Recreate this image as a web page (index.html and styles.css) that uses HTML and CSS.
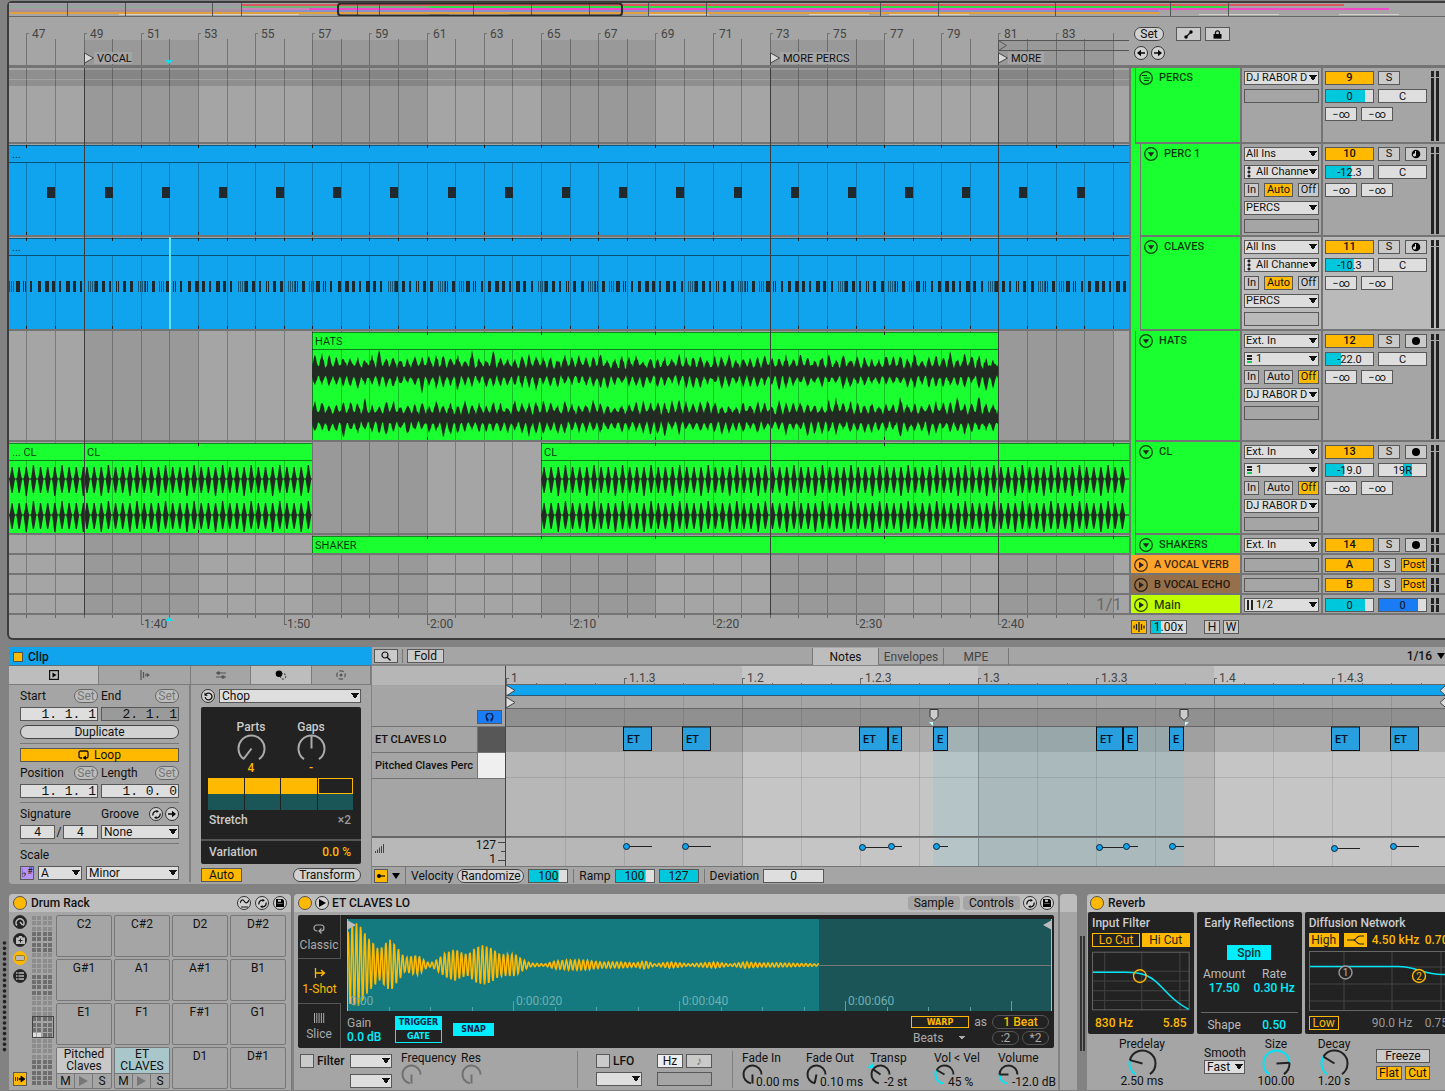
FILE: index.html
```html
<!DOCTYPE html>
<html lang="en">
<head>
<meta charset="utf-8">
<title>Arrangement</title>
<link rel="stylesheet" href="styles.css">
</head>
<body>
<main class="arrange">
  <svg class="overview" id="overview" viewBox="0 0 1436 13" preserveAspectRatio="none" aria-hidden="true"></svg>
  <div class="split ruler-row">
    <svg class="ruler" id="ruler"></svg>
    <div class="ruler-tools">
      <div class="tools">
        <button class="pill">Set</button>
        <button class="btn wide" aria-label="Automation"><svg width="9" height="9" viewBox="0 0 9 9"><path d="M2 7 7 2" stroke="#111" stroke-width="1.3"/><circle cx="2" cy="7" r="1.7"/><circle cx="7" cy="2" r="1.7"/></svg></button>
        <button class="btn wide second" aria-label="Lock"><svg width="9" height="9" viewBox="0 0 9 9"><path d="M2.5 4V2.8a2 2 0 0 1 4 0V4" fill="none" stroke="#111" stroke-width="1.3"/><rect x=".5" y="4" width="8" height="4.6"/></svg></button>
      </div>
      <div class="tools near">
        <button class="round" aria-label="Previous locator"><svg width="8" height="8" viewBox="0 0 8 8"><path d="M8 4H2" stroke="#111" stroke-width="1.6"/><path d="M0 4 4 .8v6.4z"/></svg></button>
        <button class="round" aria-label="Next locator"><svg width="8" height="8" viewBox="0 0 8 8"><path d="M0 4h6" stroke="#111" stroke-width="1.6"/><path d="M8 4 4 .8v6.4z"/></svg></button>
      </div>
    </div>
  </div>

  <section class="track h-group">
    <svg class="lane" data-lane="percs"></svg>
    <div class="head green"><div class="name"><svg class="fold" viewBox="0 0 14 14"><circle cx="7" cy="7" r="6.3"/><path d="M3 4.500h5M5 7h6M5 9.500h5"/></svg>PERCS</div></div>
    <div class="io"><select aria-label="PERCS output"><option>DJ RABOR D</option></select><div class="empty"></div></div>
    <div class="mix"><div class="strip"><button class="num">9</button><button class="btn s">S</button></div>
      <div class="strip"><input class="val" aria-label="Volume" value="0" style="--v:83%"><input class="val" aria-label="Pan" value="C"></div>
      <div class="strip"><input class="send" aria-label="Send A" value="−∞"><input class="send" aria-label="Send B" value="−∞"></div><i class="meter"></i></div>
  </section>
  <section class="track h-track">
    <svg class="lane" data-lane="perc1"></svg>
    <div class="head green"><div class="name nested"><svg class="fold" viewBox="0 0 14 14"><circle cx="7" cy="7" r="6.3"/><path class="solid" d="M3.800 5.200h6.400L7 9.800z"/></svg>PERC 1</div></div>
    <div class="io"><select aria-label="PERC 1 input"><option>All Ins</option></select><select class="midi" aria-label="PERC 1 channel"><option>All Channels</option></select>
      <div class="mon"><button class="btn">In</button><button class="btn on">Auto</button><button class="btn">Off</button></div><select aria-label="PERC 1 output"><option>PERCS</option></select><div class="empty"></div></div>
    <div class="mix"><div class="strip"><button class="num">10</button><button class="btn s">S</button><button class="btn s" aria-label="Arm"><svg class="arm" viewBox="0 0 10 10"><circle cx="5" cy="5" r="4.300"/><path d="M5 2v4a1.500 1.500 0 1 1-1-1.400V2z" fill="#ddd"/></svg></button></div>
      <div class="strip"><input class="val" aria-label="Volume" value="-12.3" style="--v:54%"><input class="val" aria-label="Pan" value="C"></div>
      <div class="strip"><input class="send" aria-label="Send A" value="−∞"><input class="send" aria-label="Send B" value="−∞"></div><i class="meter"></i></div>
  </section>
  <section class="track h-track2 selected">
    <svg class="lane" data-lane="claves"></svg>
    <div class="head green"><div class="name nested"><svg class="fold" viewBox="0 0 14 14"><circle cx="7" cy="7" r="6.3"/><path class="solid" d="M3.800 5.200h6.400L7 9.800z"/></svg>CLAVES</div></div>
    <div class="io"><select aria-label="CLAVES input"><option>All Ins</option></select><select class="midi" aria-label="CLAVES channel"><option>All Channels</option></select>
      <div class="mon"><button class="btn">In</button><button class="btn on">Auto</button><button class="btn">Off</button></div><select aria-label="CLAVES output"><option>PERCS</option></select><div class="empty"></div></div>
    <div class="mix"><div class="strip"><button class="num">11</button><button class="btn s">S</button><button class="btn s" aria-label="Arm"><svg class="arm" viewBox="0 0 10 10"><circle cx="5" cy="5" r="4.300"/><path d="M5 2v4a1.500 1.500 0 1 1-1-1.400V2z" fill="#ddd"/></svg></button></div>
      <div class="strip"><input class="val" aria-label="Volume" value="-10.3" style="--v:59%"><input class="val" aria-label="Pan" value="C"></div>
      <div class="strip"><input class="send" aria-label="Send A" value="−∞"><input class="send" aria-label="Send B" value="−∞"></div><i class="meter"></i></div>
  </section>
  <section class="track h-hats">
    <svg class="lane" data-lane="hats"></svg>
    <div class="head green"><div class="name"><svg class="fold" viewBox="0 0 14 14"><circle cx="7" cy="7" r="6.3"/><path class="solid" d="M3.800 5.200h6.400L7 9.800z"/></svg>HATS</div></div>
    <div class="io"><select aria-label="HATS input"><option>Ext. In</option></select><select class="audio" aria-label="HATS channel"><option>1</option></select>
      <div class="mon"><button class="btn">In</button><button class="btn">Auto</button><button class="btn on">Off</button></div><select aria-label="HATS output"><option>DJ RABOR D</option></select><div class="empty"></div></div>
    <div class="mix"><div class="strip"><button class="num">12</button><button class="btn s">S</button><button class="btn s" aria-label="Arm"><svg class="arm" viewBox="0 0 10 10"><circle cx="5" cy="5" r="4"/></svg></button></div>
      <div class="strip"><input class="val" aria-label="Volume" value="-22.0" style="--v:32%"><input class="val" aria-label="Pan" value="C"></div>
      <div class="strip"><input class="send" aria-label="Send A" value="−∞"><input class="send" aria-label="Send B" value="−∞"></div><i class="meter"></i></div>
  </section>
  <section class="track h-track">
    <svg class="lane" data-lane="cl"></svg>
    <div class="head green"><div class="name"><svg class="fold" viewBox="0 0 14 14"><circle cx="7" cy="7" r="6.3"/><path class="solid" d="M3.800 5.200h6.400L7 9.800z"/></svg>CL</div></div>
    <div class="io"><select aria-label="CL input"><option>Ext. In</option></select><select class="audio" aria-label="CL channel"><option>1</option></select>
      <div class="mon"><button class="btn">In</button><button class="btn">Auto</button><button class="btn on">Off</button></div><select aria-label="CL output"><option>DJ RABOR D</option></select><div class="empty"></div></div>
    <div class="mix"><div class="strip"><button class="num">13</button><button class="btn s">S</button><button class="btn s" aria-label="Arm"><svg class="arm" viewBox="0 0 10 10"><circle cx="5" cy="5" r="4"/></svg></button></div>
      <div class="strip"><input class="val" aria-label="Volume" value="-19.0" style="--v:38%"><input class="val panned" aria-label="Pan" value="19R"></div>
      <div class="strip"><input class="send" aria-label="Send A" value="−∞"><input class="send" aria-label="Send B" value="−∞"></div><i class="meter"></i></div>
  </section>
  <section class="track h-slim last">
    <svg class="lane" data-lane="shaker"></svg>
    <div class="head green"><div class="name"><svg class="fold" viewBox="0 0 14 14"><circle cx="7" cy="7" r="6.3"/><path class="solid" d="M3.800 5.200h6.400L7 9.800z"/></svg>SHAKERS</div></div>
    <div class="io"><select aria-label="SHAKERS input"><option>Ext. In</option></select></div>
    <div class="mix"><div class="strip"><button class="num">14</button><button class="btn s">S</button><button class="btn s" aria-label="Arm"><svg class="arm" viewBox="0 0 10 10"><circle cx="5" cy="5" r="4"/></svg></button></div><i class="meter"></i></div>
  </section>
  <section class="track h-slim">
    <svg class="lane" data-lane="empty"></svg>
    <div class="head flat orange"><div class="name"><svg class="fold" viewBox="0 0 14 14"><circle cx="7" cy="7" r="6.3"/><path class="solid" d="M5 3.800v6.400L10 7z"/></svg>A VOCAL VERB</div></div>
    <div class="io"><div class="empty"></div></div>
    <div class="mix"><div class="strip"><button class="num">A</button><button class="btn s2">S</button><button class="btn post on">Post</button></div><i class="meter"></i></div>
  </section>
  <section class="track h-slim">
    <svg class="lane" data-lane="empty"></svg>
    <div class="head flat brown"><div class="name"><svg class="fold" viewBox="0 0 14 14"><circle cx="7" cy="7" r="6.3"/><path class="solid" d="M5 3.800v6.400L10 7z"/></svg>B VOCAL ECHO</div></div>
    <div class="io"><div class="empty"></div></div>
    <div class="mix"><div class="strip"><button class="num">B</button><button class="btn s2">S</button><button class="btn post on">Post</button></div><i class="meter"></i></div>
  </section>
  <section class="track h-slim">
    <svg class="lane" data-lane="main"></svg>
    <div class="head flat lime"><div class="name"><svg class="fold" viewBox="0 0 14 14"><circle cx="7" cy="7" r="6.3"/><path class="solid" d="M5 3.800v6.400L10 7z"/></svg><span class="main-name">Main</span></div></div>
    <div class="io"><select class="outs" aria-label="Main output"><option>1/2</option></select></div>
    <div class="mix"><div class="strip"><input class="val" aria-label="Main volume" value="0" style="--v:83%"><input class="val cue" aria-label="Cue volume" value="0" style="--v:83%"></div><i class="meter"></i></div>
  </section>
  <div class="split time-row">
    <svg class="time" id="time"></svg>
    <div class="view-tools">
      <button class="btn on sq" aria-label="Waveforms"><svg width="12" height="10" viewBox="0 0 12 10"><path d="M1 3.500v3M3.500 2v6M6 0v10M8.500 2v6M11 3.500v3" stroke="#222" stroke-width="1.300"/></svg></button>
      <input class="val speed" aria-label="Speed" value="1.00x" style="--v:29%">
      <button class="btn sq first">H</button><button class="btn sq">W</button>
    </div>
  </div>
</main>

<section class="middle">
  <div class="clip">
    <h2 class="clip-title"><i></i>Clip</h2>
    <div class="clip-tabs">
      <button class="active t1" aria-label="Clip"><svg width="10" height="10" viewBox="0 0 10 10"><rect x=".6" y=".6" width="8.800" height="8.800" fill="none" stroke="#111" stroke-width="1.200"/><path d="M3.500 2.500v5L7.500 5z"/></svg></button>
      <button class="t2" aria-label="Launch"><svg width="10" height="10" viewBox="0 0 10 10"><path d="M1 0v10M3.500 2v6M6 3.500v3" stroke="#555" stroke-width="1.200"/><path d="M7 3v4l3-2z" fill="#555"/></svg></button>
      <button class="t3" aria-label="Envelopes"><svg width="10" height="8" viewBox="0 0 10 8"><path d="M0 2h10M0 6h10" stroke="#555" stroke-width="1.200"/><circle cx="2.500" cy="2" r="1.700" fill="#555"/><circle cx="7" cy="6" r="1.700" fill="#555"/></svg></button>
      <button class="active t4" aria-label="Transform"><svg width="12" height="10" viewBox="0 0 12 10"><circle cx="4" cy="3.800" r="3.300"/><circle cx="8" cy="6.300" r="2.800" fill="none" stroke="#222" stroke-dasharray="2 1.500"/></svg></button>
      <button class="t5" aria-label="Generate"><svg width="10" height="10" viewBox="0 0 10 10"><circle cx="5" cy="5" r="4.200" fill="none" stroke="#555" stroke-width="1.200" stroke-dasharray="4.600 2" stroke-dashoffset="2.300"/><circle cx="5" cy="5" r="1.500" fill="#555"/></svg></button>
    </div>
    <div class="clip-body">
      <div class="clip-main">
        <div class="pair"><span class="lab">Start <button class="pill dim">Set</button></span><span class="lab">End <button class="pill dim">Set</button></span></div>
        <div class="pair"><input class="pos" aria-label="Start" value="1. 1. 1"><input class="pos off" aria-label="End" value="2. 1. 1"></div>
        <button class="pill full">Duplicate</button>
        <hr>
        <button class="btn on full"><svg width="11" height="10" viewBox="0 0 11 10"><path d="M4 8H2.500A1.500 1.500 0 0 1 1 6.500v-4A1.500 1.500 0 0 1 2.500 1h6A1.500 1.500 0 0 1 10 2.500v4A1.500 1.500 0 0 1 8.500 8H7" fill="none" stroke="#111" stroke-width="1.300"/><path d="M8 5.500v4.500L4.500 8z"/></svg> Loop</button>
        <div class="pair"><span class="lab">Position <button class="pill dim">Set</button></span><span class="lab">Length <button class="pill dim">Set</button></span></div>
        <div class="pair"><input class="pos" aria-label="Position" value="1. 1. 1"><input class="pos" aria-label="Length" value="1. 0. 0"></div>
        <hr>
        <div class="pair"><span class="lab">Signature</span><span class="lab">Groove <span class="rounds"><button class="round" aria-label="Swap groove"><svg width="9" height="9" viewBox="0 0 9 9"><path d="M1 5.500a3.500 3.500 0 0 1 4-4.300M8 3.500a3.500 3.500 0 0 1-4 4.300" fill="none" stroke="#111" stroke-width="1.300"/><path d="M4.500 0 7 1.300 4.500 3zM4.500 9 2 7.700 4.500 6z"/></svg></button><button class="round" aria-label="Commit groove"><svg width="8" height="8" viewBox="0 0 8 8"><path d="M0 4h6" stroke="#111" stroke-width="1.600"/><path d="M8 4 4 .8v6.400z"/></svg></button></span></span></div>
        <div class="pair"><span class="sig"><input class="val" aria-label="Numerator" value="4">/<input class="val" aria-label="Denominator" value="4"></span><select aria-label="Groove"><option>None</option></select></div>
        <hr>
        <div class="lab">Scale</div>
        <div class="scale"><button class="btn violet" aria-label="Use scale">♭<sup>#</sup></button><select aria-label="Root"><option>A</option></select><select class="grow" aria-label="Scale name"><option>Minor</option></select></div>
      </div>
      <div class="transform">
        <div class="scale"><button class="round" aria-label="Reset"><svg width="9" height="9" viewBox="0 0 9 9"><path d="M2 2.300A3.400 3.400 0 1 1 1.200 5" fill="none" stroke="#111" stroke-width="1.300"/><path d="M.5.500v3.300h3.300z"/></svg></button><select class="grow" aria-label="Transformation"><option>Chop</option></select></div>
        <div class="chop">
          <div class="chop-knobs">
            <div><span>Parts</span><svg class="knob" data-r="13" data-a="-143" data-c="#aaa"></svg><b>4</b></div>
            <div><span>Gaps</span><svg class="knob" data-r="13" data-a="0" data-c="#aaa"></svg><b>-</b></div>
          </div>
          <div class="parts"><i></i><i></i><i></i><i class="hollow"></i></div>
          <div class="line"><span>Stretch</span><span class="faint">×2</span></div>
          <div class="line foot"><span>Variation</span><b>0.0 %</b></div>
        </div>
        <div class="ends"><button class="btn on">Auto</button><button class="pill">Transform</button></div>
      </div>
    </div>
  </div>

  <div class="notes">
    <div class="notes-bar">
      <button class="btn search" aria-label="Find"><svg width="10" height="10" viewBox="0 0 10 10"><circle cx="4" cy="4" r="3" fill="none" stroke="#111" stroke-width="1.200"/><path d="m6.200 6.200 3.300 3.300" stroke="#111" stroke-width="1.400"/></svg></button>
      <i class="bar-sep"></i><button class="btn">Fold</button>
      <nav><a href="#notes" class="active">Notes</a><a href="#envelopes">Envelopes</a><a href="#mpe">MPE</a></nav>
      <span class="gridsize">1/16 <svg width="8" height="6" viewBox="0 0 8 6"><path d="M0 0h8L4 6z"/></svg></span>
    </div>
    <div class="roll">
      <div class="keys">
        <div class="keys-top"></div>
        <div class="keys-mid"><button class="btn blue" aria-label="Preview"><svg width="11" height="9" viewBox="0 0 11 9"><path d="M3.800 8.300V6.300A3.300 3.300 0 1 1 7.200 6.300v2" fill="none" stroke="#02235c" stroke-width="1.500"/><path d="M2 5h2v3.500L2 7zM9 5H7v3.500L9 7z" fill="#02235c"/></svg></button></div>
        <div class="key"><span>ET CLAVES LO</span><i class="black"></i></div>
        <div class="key"><span>Pitched Claves Perc</span><i></i></div>
        <div class="keys-rest"></div>
        <div class="vel"><svg width="9" height="9" viewBox="0 0 9 9"><path d="M.5 7v2M2.500 5.500V9M4.500 3.500V9M6.500 2v7M8.500 0v9" stroke="#444"/></svg><span>127<br>1</span></div>
      </div>
      <svg class="score" id="score"></svg>
    </div>
    <div class="vel-bar">
      <button class="btn on icon" aria-label="Velocity lane"><svg width="8" height="6" viewBox="0 0 8 6"><circle cx="2" cy="3" r="2"/><path d="M2 3h6" stroke="#111" stroke-width="1.300"/></svg></button>
      <svg width="8" height="6" viewBox="0 0 8 6"><path d="M0 0h8L4 6z"/></svg><i class="bar-sep tall"></i>
      <label for="rnd">Velocity</label><button class="pill">Randomize</button><input id="rnd" class="val" value="100" style="--v:78%">
      <i class="bar-sep"></i><label for="ramp">Ramp</label><input id="ramp" class="val" value="100" style="--v:78%"><input class="val" aria-label="Ramp end" value="127" style="--v:100%">
      <i class="bar-sep"></i><label for="dev">Deviation</label><input id="dev" class="val dev" value="0">
    </div>
  </div>
</section>

<section class="devices">
  <svg class="dots" id="dots"></svg>
  <article class="device rack">
    <header><i class="led"></i><h3>Drum Rack</h3>
      <button class="round" aria-label="Macro"><svg width="9" height="9" viewBox="0 0 9 9"><path d="M0 4c1.500-4 3-4 4.500-1.500S7.500 4 9 1M1 8h7" fill="none" stroke="#111" stroke-width="1.200"/></svg></button>
      <button class="round" aria-label="Swap"><svg width="9" height="9" viewBox="0 0 9 9"><path d="M1 5.500a3.500 3.500 0 0 1 4-4.300M8 3.500a3.500 3.500 0 0 1-4 4.300" fill="none" stroke="#111" stroke-width="1.300"/><path d="M4.500 0 7 1.300 4.500 3zM4.500 9 2 7.700 4.500 6z"/></svg></button>
      <button class="round" aria-label="Save"><svg width="8" height="8" viewBox="0 0 8 8"><path d="M0 0h6.500L8 1.500V8H0z"/><path d="M2 .8h3v2H2zM1.500 4.500h5V5h-5z" fill="#ccc"/></svg></button></header>
    <div class="rack-body">
      <div class="rack-icons">
        <button class="round dark" aria-label="Macros"><svg width="10" height="10" viewBox="0 0 10 10"><path d="M2 8.500A4 4 0 1 1 8 8.500M5 5l2.500 3" fill="none" stroke="#bbb" stroke-width="1.600"/></svg></button>
        <button class="round dark" aria-label="Variations"><svg width="9" height="8" viewBox="0 0 9 8"><path d="M0 1.500h2.500L3 0h3l.5 1.500H9V8H0z" fill="#bbb"/><path d="M4.500 2.500v4M2.500 4.500h4" stroke="#222"/></svg></button>
        <button class="round gold" aria-label="Pads"><svg width="10" height="6" viewBox="0 0 10 6"><rect x=".5" y=".5" width="9" height="5" rx="1" fill="#bbb" stroke="#9a7a20"/></svg></button>
        <button class="round dark" aria-label="Chains"><svg width="8" height="8" viewBox="0 0 8 8"><path d="M0 1h1.500M0 4h1.500M0 7h1.500M2.500 1H8M2.500 4H8M2.500 7H8" stroke="#bbb" stroke-width="1.300"/></svg></button>
        <button class="btn on auto" aria-label="Auto select"><svg width="10" height="8" viewBox="0 0 10 8"><path d="M.5 2v4M2.500 2v4M4 3.300h2V1l4 3-4 3V4.700H4z" stroke="#111" stroke-width=".8"/></svg></button>
      </div>
      <svg class="minimap" id="minimap"></svg>
      <div class="pads">
        <div class="pad">C2</div><div class="pad">C#2</div><div class="pad">D2</div><div class="pad">D#2</div>
        <div class="pad">G#1</div><div class="pad">A1</div><div class="pad">A#1</div><div class="pad">B1</div>
        <div class="pad">E1</div><div class="pad">F1</div><div class="pad">F#1</div><div class="pad">G1</div>
        <div class="pad full"><span>Pitched<br>Claves</span><div><button>M</button><button aria-label="Play"><svg width="9" height="10" viewBox="0 0 9 10"><path d="M0 0v10l9-5z" fill="#777"/></svg></button><button>S</button></div></div>
        <div class="pad full sel"><span>ET<br>CLAVES</span><div><button>M</button><button aria-label="Play"><svg width="9" height="10" viewBox="0 0 9 10"><path d="M0 0v10l9-5z" fill="#777"/></svg></button><button>S</button></div></div>
        <div class="pad">D1</div><div class="pad">D#1</div>
      </div>
    </div>
  </article>

  <article class="device sampler">
    <header><i class="led"></i><button class="round" aria-label="Preview"><svg width="8" height="8" viewBox="0 0 8 8"><path d="M1 0v8l7-4z"/></svg></button><h3>ET CLAVES LO</h3>
      <a href="#sample" class="tab">Sample</a><a href="#controls" class="tab">Controls</a>
      <button class="round" aria-label="Swap"><svg width="9" height="9" viewBox="0 0 9 9"><path d="M1 5.500a3.500 3.500 0 0 1 4-4.300M8 3.500a3.500 3.500 0 0 1-4 4.300" fill="none" stroke="#111" stroke-width="1.300"/><path d="M4.500 0 7 1.300 4.500 3zM4.500 9 2 7.700 4.500 6z"/></svg></button>
      <button class="round" aria-label="Save"><svg width="8" height="8" viewBox="0 0 8 8"><path d="M0 0h6.500L8 1.500V8H0z"/><path d="M2 .8h3v2H2zM1.500 4.500h5V5h-5z" fill="#ccc"/></svg></button></header>
    <div class="screen">
      <div class="modes">
        <button><svg width="12" height="12" viewBox="0 0 12 12"><path d="M4.500 8H4a3 3 0 0 1 0-6h4a3 3 0 0 1 0 6H6.500M8.500 5.500 6 8l2.500 2.500" fill="none" stroke="#aaa" stroke-width="1.200"/></svg>Classic</button>
        <button class="active"><svg width="12" height="12" viewBox="0 0 12 12"><path d="M1.500 1v10M2 6h8M7 3l3.500 3L7 9" fill="none" stroke="#ffb900" stroke-width="1.300"/></svg>1-Shot</button>
        <button><svg width="12" height="12" viewBox="0 0 12 12"><path d="M1.500 1v10M3.800 1v10M6.100 1v10M8.400 1v10M10.700 1v10" stroke="#aaa"/></svg>Slice</button>
      </div>
      <div class="wave-side">
        <svg id="wave"></svg>
        <div class="wave-tools">
          <div class="gain"><label for="gain">Gain</label><input id="gain" value="0.0 dB"></div>
          <div class="toggle"><button class="pix">TRIGGER</button><button class="pix off">GATE</button></div>
          <button class="pix snap">SNAP</button>
          <div class="warp"><button class="pix warpbtn">WARP</button><span class="as">as</span><button class="outline gold">1 Beat</button>
            <select class="beats" aria-label="Warp mode"><option>Beats</option></select><span class="two"><button class="outline">:2</button><button class="outline">*2</button></span></div>
        </div>
      </div>
    </div>
    <div class="params">
      <div class="filter"><label><input type="checkbox">Filter</label><div class="stack"><select aria-label="Filter type"><option></option></select><select aria-label="Filter slope"><option></option></select></div>
        <div class="kn"><span>Frequency</span><svg class="knob" data-r="9" data-a="180" data-c="#707070"></svg></div>
        <div class="kn"><span>Res</span><svg class="knob" data-r="9" data-a="180" data-c="#707070"></svg></div></div>
      <div class="lfo"><label><input type="checkbox">LFO</label><span class="two"><button class="btn light">Hz</button><button class="btn note">♪</button></span><select aria-label="LFO wave"><option></option></select><div class="empty"></div></div>
      <div class="env">
        <div class="kn"><span>Fade In</span><svg class="knob" data-r="9" data-a="180" data-c="#222"></svg><em>0.00 ms</em></div>
        <div class="kn"><span>Fade Out</span><svg class="knob" data-r="9" data-a="192" data-c="#222"></svg><em>0.10 ms</em></div>
        <div class="kn"><span>Transp</span><svg class="knob" data-r="9" data-a="-55" data-c="#222" data-mark="1"></svg><em>-2 st</em></div>
        <div class="kn"><span>Vol &lt; Vel</span><svg class="knob" data-r="9" data-a="-60" data-c="#222" data-fill="1"></svg><em>45 %</em></div>
        <div class="kn"><span>Volume</span><svg class="knob" data-r="9" data-a="-90" data-c="#222" data-fill="1"></svg><em>-12.0 dB</em></div>
      </div>
    </div>
  </article>
  <div class="device rack-end"><header></header></div>
  <i class="chain-meter"></i>
  <article class="device reverb">
    <header><i class="led"></i><h3>Reverb</h3></header>
    <div class="panels">
      <div class="panel filt"><h4>Input Filter</h4>
        <div class="row2"><button class="y hollow">Lo Cut</button><button class="y">Hi Cut</button></div>
        <svg class="graph" viewBox="0 0 100 60"><path d="M13 0v60M51 0v60M90 0v60M0 20h100M0 30h100M0 40h100M0 50h100" stroke="#444"/><rect x=".5" y=".5" width="99" height="59" fill="none" stroke="#666"/><path d="M1 21h33C52 21 60 24 72 37S90 54 99 59" fill="none" stroke="#00e5f5" stroke-width="1.600"/><circle cx="49" cy="25" r="6.500" fill="none" stroke="#ffb900" stroke-width="1.400"/></svg>
        <div class="row2 gold"><b>830 Hz</b><b>5.85</b></div></div>
      <div class="panel early"><h4>Early Reflections</h4><button class="spin">Spin</button>
        <div class="cols"><span>Amount</span><span>Rate</span><b>17.50</b><b>0.30 Hz</b></div><hr>
        <div class="cols"><span>Shape</span><b>0.50</b></div></div>
      <div class="panel diff"><h4>Diffusion Network</h4>
        <div class="vals"><button class="y">High</button><button class="y shelf" aria-label="Shelf"><svg width="17" height="10" viewBox="0 0 17 10"><path d="M0 5h6c4 0 3-4 7-4h4M6 5c4 0 3 4 7 4h4" fill="none" stroke="#222" stroke-width="1.200"/></svg></button><b>4.50 kHz</b><b>0.70</b></div>
        <svg class="graph" viewBox="0 0 200 60" preserveAspectRatio="xMinYMin slice"><path d="M35 0v60M83 0v60M132 0v60M180 0v60M0 16h200M0 33h200M0 50h200" stroke="#444"/><rect x=".5" y=".5" width="199" height="59" fill="none" stroke="#666"/><path d="M1 15.500h88c20 0 24 8 45 8h66" fill="none" stroke="#00e5f5" stroke-width="1.600"/><g fill="#222" stroke-width="1.400"><circle cx="36.500" cy="21.500" r="6.500" stroke="#999"/><circle cx="110" cy="25" r="6.500" stroke="#ffb900"/></g><text x="36.500" y="25">1</text><text class="hot" x="110" y="28.500">2</text></svg>
        <div class="vals low"><button class="y hollow">Low</button><span></span><span>90.0 Hz</span><span>0.75</span></div></div>
    </div>
    <div class="rv">
      <div class="rk"><span>Predelay</span><svg class="knob" data-r="13" data-a="-75" data-c="#222" data-fill="1"></svg><span>2.50 ms</span></div>
      <div class="smooth"><label for="sm">Smooth</label><select id="sm"><option>Fast</option></select></div>
      <div class="rk size"><span>Size</span><svg class="knob" data-r="13" data-a="87" data-c="#222" data-fill="1"></svg><span>100.00</span></div>
      <div class="rk decay"><span>Decay</span><svg class="knob" data-r="13" data-a="-58" data-c="#222" data-fill="1"></svg><span>1.20 s</span></div>
      <div class="freeze"><button class="btn">Freeze</button><button class="btn on">Flat</button><button class="btn on">Cut</button></div>
    </div>
  </article>
</section>
<script src="script.js"></script>
</body>
</html>
```
FILE: styles.css
```css
* { box-sizing: border-box; }
:root { --line: #747474; --edge: #585858; --panel: #a5a5a5; --box: #dedede; --gold: #ffb900; --cyan: #00c8dc; --bright: #00eeff; --dark: #222; }
body { margin: 0; min-height: 100vh; background: #828282; color: #111; font: 12px/14px Roboto, "Liberation Sans", sans-serif; overflow-x: hidden; }
h2, h3, h4 { margin: 0; font-size: 12px; line-height: 14px; font-weight: 500; }
button, input, select { font: inherit; color: inherit; margin: 0; padding: 0; border-radius: 0; min-width: 0; }
button { display: flex; align-items: center; justify-content: center; white-space: nowrap; flex: none; }
a { color: inherit; text-decoration: none; }
svg { display: block; flex: none; }
i { display: block; flex: none; font-style: normal; }
svg text { font: 12px Roboto, "Liberation Sans", sans-serif; fill: #444; }

/* shared controls */
select { appearance: none; height: 14px; width: 100%; border: 1px solid var(--edge); padding: 0 10px 0 2px; line-height: 12px; overflow: hidden; text-overflow: clip; outline: 0;
  background: linear-gradient(to top right, transparent 50%, #111 50%) right 5px top 3px / 4px 6px no-repeat, linear-gradient(to top left, transparent 50%, #111 50%) right 1px top 3px / 4px 6px no-repeat, var(--box); }
.btn { height: 14px; border: 1px solid var(--edge); background: #cacaca; line-height: 12px; padding: 0 3px; }
.btn.on, .num { background: var(--gold); }
.num { width: 49px; height: 14px; border: 1px solid var(--edge); line-height: 12px; font-weight: 500; }
.pill { height: 14px; border: 1px solid #444; border-radius: 7px; background: #d2d2d2; line-height: 12px; padding: 0 4px; }
.pill.dim { color: #777; border-color: #666; background: #bdbdbd; padding: 0; width: 24px; }
.round { width: 14px; height: 14px; border: 1px solid #333; border-radius: 50%; background: #d2d2d2; }
.round.dark { background: var(--dark); }
.round.gold { background: var(--gold); border-color: var(--gold); }
.val, .send { height: 14px; width: 49px; border: 1px solid var(--edge); text-align: center; line-height: 12px; outline: 0;
  background: linear-gradient(var(--fill, var(--cyan)) 0 0) left / var(--v, 0%) 100% no-repeat, var(--box); }
.val.cue { --fill: #1a7cf5; }
.val.panned { background: linear-gradient(var(--cyan) 0 0) 24px 0 / 9px 100% no-repeat, var(--box); }
.send { width: 32px; }
.empty { height: 14px; border: 1px solid var(--edge); }

/* arrangement */
.arrange { margin: 1px 0 7px 7px; border: 2px solid #3c3c3c; border-right: 0; border-radius: 5px 0 0 6px; background: var(--panel); }
.overview { width: 100%; height: 14px; border-bottom: 1px solid #666; }
.split { display: grid; grid-template-columns: minmax(0, 1fr) 316px; }
.ruler-row { border-bottom: 3px solid var(--line); }
.ruler { width: 100%; height: 48px; }
.ruler-tools { padding: 10px 0 0 5px; display: flex; flex-direction: column; gap: 5px; }
.tools { display: flex; align-items: center; }
.tools .pill { width: 30px; margin-right: 12px; }
.tools .wide { width: 25px; }
.tools .second { margin-left: 4px; }
.near { gap: 3px; }
.track { display: grid; grid-template-columns: minmax(0, 1fr) 111px 81px 124px; }
.h-group { height: 76px; }
.h-track { height: 93px; }
.h-track2 { height: 94px; }
.h-hats { height: 111px; }
.h-slim { height: 20px; }
.lane { width: 100%; height: 100%; }
.head { border-left: 2px solid var(--line); padding-left: 4px; display: flex; overflow: hidden; }
.name { flex: 1; display: flex; align-items: flex-start; gap: 6px; padding: 3px 0 0 3px; border-left: 1px solid var(--line); border-bottom: 2px solid var(--line); font-weight: 500; font-size: 11px; white-space: nowrap; color: rgba(0, 0, 0, .78); }
.name.nested { margin-left: 5px; }
.flat { padding-left: 0; }
.flat .name { border-left: 0; }
.main-name { font-size: 12px; }
.green { background: #1aff2f; }
.orange { background: #ffa52b; }
.brown { background: #96704a; }
.lime { background: #c0ff00; }
.fold { width: 14px; height: 14px; fill: none; stroke: rgba(0, 0, 0, .75); stroke-width: 1.2; }
.fold .solid { fill: #222; stroke: none; }
.io, .mix { border-left: 2px solid var(--line); border-bottom: 2px solid var(--line); overflow: hidden; }
.io { padding: 3px 2px 0 2px; display: flex; flex-direction: column; gap: 4px; font-size: 11px; }
.io select, .io .empty { flex: none; }
.io select { padding-left: 1px; }
.selected .io, .selected .mix { background: #bababa; }
.io .midi { padding-left: 11px; background: radial-gradient(circle, #222 1px, transparent 2px) 2px 0 / 4px 4px repeat-y, linear-gradient(to top right, transparent 50%, #111 50%) right 5px top 3px / 4px 6px no-repeat, linear-gradient(to top left, transparent 50%, #111 50%) right 1px top 3px / 4px 6px no-repeat, var(--box); }
.io .audio { padding-left: 11px; background: linear-gradient(#222 0 2px, #dedede 2px 3px, #222 3px 5px, #dedede 5px 6px, #1c5 6px) 2px 2px / 5px 8px no-repeat, linear-gradient(to top right, transparent 50%, #111 50%) right 5px top 3px / 4px 6px no-repeat, linear-gradient(to top left, transparent 50%, #111 50%) right 1px top 3px / 4px 6px no-repeat, var(--box); }
.io .outs { padding-left: 11px; background: linear-gradient(90deg, #222 0 2px, transparent 2px 4px, #222 4px) 2px 1px / 6px 10px no-repeat, linear-gradient(to top right, transparent 50%, #111 50%) right 5px top 3px / 4px 6px no-repeat, linear-gradient(to top left, transparent 50%, #111 50%) right 1px top 3px / 4px 6px no-repeat, var(--box); }
.mon { display: flex; justify-content: space-between; }
.mon .btn { padding: 0 2px; }
.mix { position: relative; padding: 3px 0 0 2px; display: flex; flex-direction: column; gap: 4px; font-size: 11px; }
.strip { display: flex; gap: 4px; }
.strip .s { width: 22px; padding: 0; }
.strip .s2 { width: 18px; padding: 0; }
.strip .s + .s { margin-left: 1px; }
.post { width: 26px; overflow: hidden; margin-left: 1px; padding: 0; }
.arm { width: 10px; height: 10px; }
.meter { position: absolute; left: 108px; top: 3px; bottom: 1px; width: 8px; background: linear-gradient(var(--panel) 0 0) 0 6px / 100% 1px no-repeat, linear-gradient(90deg, #222 0 3px, transparent 3px 5px, #222 5px); }
.time { width: 100%; height: 23px; }
.view-tools { display: flex; align-items: center; gap: 3px; padding-left: 2px; }
.sq { width: 16px; padding: 0; }
.sq.first { margin-left: 14px; }
.speed { width: 37px; }

/* clip and note editor */
.middle { display: grid; grid-template-columns: 362px minmax(0, 1fr); gap: 1px; margin-left: 9px; }
.clip { background: var(--panel); border-radius: 0 0 0 3px; }
.clip-title { height: 19px; background: #10a4ee; display: flex; align-items: center; gap: 5px; padding: 1px 0 0 4px; border-bottom: 1px solid #57707c; }
.clip-title i { width: 10px; height: 10px; background: var(--gold); border: 1px solid #555; }
.clip-tabs { display: grid; grid-template-columns: 90px 92px 60px 61px 59px; height: 19px; border-bottom: 1px solid #7c7c7c; }
.clip-tabs button { border: 0; border-right: 1px solid #7c7c7c; background: none; }
.clip-tabs .active { background: #bdbdbd; }
.clip-body { display: grid; grid-template-columns: 182px 180px; }
.clip-main { border-right: 2px solid #808080; padding: 4px 0 2px 11px; display: flex; flex-direction: column; gap: 4px; }
.clip-main > * { width: 159px; }
.clip-main .full { width: 159px; gap: 5px; }
.pair { display: grid; grid-template-columns: 78px 78px; gap: 3px; height: 14px; }
.lab { display: flex; justify-content: space-between; align-items: center; height: 14px; }
.rounds { display: flex; gap: 2px; }
.pos { width: 78px; height: 14px; border: 1px solid var(--edge); background: var(--box); text-align: right; font: 13px/12px "Liberation Mono", monospace; padding-right: 1px; }
.pos.off { background: #9a9a9a; }
.sig { display: flex; justify-content: space-between; }
.sig .val { width: 35px; }
.clip-main hr { margin: 0; border: 0; height: 1px; background: #777; }
.scale { display: flex; gap: 4px; }
.scale select { width: 44px; }
.scale .grow { flex: 1; }
.scale .violet { width: 14px; padding: 0; background: #b795ff; }
.violet sup { font-size: 9px; line-height: 9px; align-self: flex-start; }
.transform { padding: 4px 0 0 10px; display: flex; flex-direction: column; gap: 4px; width: 170px; }
.chop { height: 157px; background: var(--dark); border-radius: 2px; color: #ccc; padding: 13px 8px 0; display: flex; flex-direction: column; }
.chop b { color: var(--gold); font-weight: 500; line-height: 10px; }
.chop-knobs { display: grid; grid-template-columns: 60px 60px; padding-left: 12px; height: 58px; font-weight: 500; }
.chop-knobs div { display: flex; flex-direction: column; align-items: center; }
.parts { display: grid; grid-template-columns: repeat(4, 1fr); gap: 1px; width: 145px; margin-left: -1px; }
.parts i { height: 32px; background: linear-gradient(var(--gold) 0 16px, #1a5558 16px); }
.parts .hollow { background: linear-gradient(var(--dark) 0 0) 1px 1px / calc(100% - 2px) 14px no-repeat, linear-gradient(var(--gold) 0 16px, #1a5558 16px); }
.line { display: flex; justify-content: space-between; padding: 3px 2px 0 0; height: 29px; align-items: flex-start; font-weight: 500; }
.line.foot { border-top: 2px solid #555; margin: 0 -8px; padding: 0 10px 0 8px; height: 24px; align-items: center; }
.faint { color: #999; }
.ends { display: flex; justify-content: space-between; }
.ends .on { width: 41px; }
.ends .pill { width: 68px; }
.notes { background: var(--panel); display: flex; flex-direction: column; }
.notes-bar { display: flex; align-items: center; height: 19px; border-bottom: 2px solid #858585; padding: 1px 0 0 2px; gap: 4px; }
.search { width: 24px; }
.notes-bar .bar-sep + .btn { width: 37px; }
.bar-sep { width: 1px; height: 14px; background: #777; }
.bar-sep.tall { height: 18px; }
.notes-bar nav { display: flex; height: 17px; margin-left: 364px; }
.notes-bar nav a { width: 65px; border-right: 1px solid #777; text-align: center; line-height: 18px; color: #444; }
.notes-bar nav .active { color: #111; background: #bdbdbd; border-left: 1px solid #777; width: 67px; }
.gridsize { margin-left: auto; display: flex; gap: 5px; align-items: center; font-weight: 500; }
.roll { display: grid; grid-template-columns: 133px minmax(0, 1fr); }
.score { width: 100%; height: 200px; border-left: 1px solid #444; }
.keys { display: flex; flex-direction: column; }
.keys-top { height: 19px; background: #b6b6b6; }
.keys-mid { height: 42px; display: flex; align-items: flex-end; justify-content: flex-end; padding: 0 3px 2px 0; border-bottom: 1px solid var(--line); }
.blue { width: 25px; background: #1a7cf5; padding: 0; }
.key { height: 26px; display: flex; justify-content: space-between; align-items: center; border-bottom: 1px solid var(--line); font-size: 11px; font-weight: 500; }
.key span { width: 105px; padding-left: 3px; white-space: nowrap; overflow: hidden; }
.key i { width: 28px; height: 25px; background: #efefef; border-left: 1px solid var(--line); }
.key .black { background: #575757; }
.keys-rest { height: 59px; border-bottom: 2px solid #666; }
.vel { height: 28px; background: #b8b8b8; display: flex; justify-content: space-between; padding: 4px 0 0 3px; }
.vel svg { margin-top: 2px; }
.vel span { text-align: right; line-height: 14px; width: 36px; padding-right: 9px; margin-top: -4px; background: linear-gradient(#444 0 0) right 4px / 7px 1px no-repeat, linear-gradient(#444 0 0) right 13px / 4px 1px no-repeat, linear-gradient(#444 0 0) right 22px / 7px 1px no-repeat; }
.vel-bar { display: flex; align-items: center; gap: 4px; height: 18px; border-top: 1px solid #777; padding-left: 2px; }
.vel-bar .bar-sep { margin: 0 1px; }
.vel-bar .icon { width: 14px; padding: 0; }
.vel-bar .val { width: 40px; }
.vel-bar .val.dev { width: 61px; }
.vel-bar .pill { width: 67px; }

/* device chain */
.devices { display: flex; margin-top: 10px; height: 196px; overflow: hidden; }
.dots { width: 9px; height: 160px; }
.device { background: var(--panel); border-radius: 4px 4px 0 0; flex: none; display: flex; flex-direction: column; }
.device header { height: 18px; background: #bdbdbd; border-radius: 4px 4px 0 0; display: flex; align-items: center; gap: 4px; padding: 0 6px 0 4px; flex: none; }
.device h3 { flex: 1; white-space: nowrap; }
.led { width: 14px; height: 14px; border-radius: 50%; background: var(--gold); border: 1px solid #555; }
.rack { width: 283px; margin-right: 2px; border-right: 1px solid #777; }
.rack header { padding-right: 4px; }
.rack-body { display: flex; padding: 3px 0 0 4px; }
.rack-icons { display: flex; flex-direction: column; gap: 4px; width: 19px; height: 171px; }
.rack-icons .auto { width: 14px; margin-top: auto; padding: 0; }
.minimap { width: 24px; height: 172px; }
.pads { display: grid; grid-template-columns: repeat(4, 56px); grid-auto-rows: 42px; gap: 2px; }
.pad { border: 1px solid #777; border-radius: 2px; text-align: center; padding-top: 1px; }
.pad.full { padding: 0; display: flex; flex-direction: column; line-height: 12px; }
.pad.full span { flex: 1; background: #c8c8c8; }
.pad.sel span { background: #a9c6ca; }
.pad.full div { display: grid; grid-template-columns: repeat(3, 1fr); height: 15px; border-top: 1px solid #777; }
.pad button { border: 0; background: none; border-right: 1px solid #777; }
.pad button:last-child { border-right: 0; }
.sampler { width: 764px; }
.sampler header { gap: 3px; padding-right: 4px; }
.tab { background: var(--panel); height: 14px; padding: 0 6px; border-radius: 3px; }
.screen { margin: 3px 4px 0; height: 133px; background: var(--dark); border-radius: 2px; display: flex; flex: none; color: #aaa; }
.modes { width: 43px; display: grid; grid-template-rows: repeat(3, 1fr); }
.modes button { flex-direction: column; gap: 3px; background: none; border: 0; border-right: 1px solid #555; border-bottom: 1px solid #555; padding-top: 2px; }
.modes .active { color: var(--gold); border-right: 0; }
.modes button:last-child { border-bottom: 0; }
.wave-side { flex: 1; padding: 4px 2px 0 6px; min-width: 0; }
#wave { width: 100%; height: 93px; }
.wave-tools { display: flex; padding-top: 4px; }
.gain { width: 48px; }
.gain label { display: block; line-height: 14px; }
.gain input { width: 44px; border: 0; background: none; color: var(--bright); font-weight: 500; line-height: 14px; }
.pix { font: bold 8px/11px "DejaVu Sans", sans-serif; background: var(--bright); border: 1px solid var(--bright); color: #124; height: 13px; }
.toggle { width: 47px; }
.toggle .pix { width: 47px; }
.toggle .off { background: none; color: var(--bright); height: 14px; }
.snap { width: 41px; margin: 7px 0 0 11px; }
.warp { margin: -1px 3px 0 auto; display: grid; grid-template-columns: 58px 15px 57px; column-gap: 4px; row-gap: 2px; align-items: center; justify-items: center; }
.warpbtn { width: 58px; height: 12px; background: none; color: var(--gold); border-color: var(--gold); }
.outline { height: 14px; width: 57px; border: 1px solid #555; border-radius: 7px; background: none; line-height: 12px; }
.outline.gold { color: var(--gold); font-weight: 500; }
.two { display: flex; gap: 3px; }
.warp .two .outline { width: 27px; }
.warp .beats { grid-column: 1 / 3; width: 72px; justify-self: start; border: 0; background: linear-gradient(to top right, transparent 50%, #aaa 50%) 48px 5px / 3px 4px no-repeat, linear-gradient(to top left, transparent 50%, #aaa 50%) 51px 5px / 3px 4px no-repeat; }
.params { display: flex; border-top: 0; padding: 3px 0 0 6px; }
.params label { display: flex; gap: 3px; font-weight: 500; height: 14px; align-items: center; }
.params input[type=checkbox] { appearance: none; width: 14px; height: 14px; border: 1px solid var(--edge); background: #cacaca; }
.filter { display: flex; width: 278px; border-right: 1px solid #808080; height: 37px; padding-top: 3px; }
.filter label { width: 50px; }
.stack { display: flex; flex-direction: column; gap: 6px; width: 42px; margin-right: 9px; }
.kn { width: 60px; height: 37px; position: relative; white-space: nowrap; }
.filter .kn { margin-top: -3px; }
.kn span { display: block; height: 14px; }
.kn em { position: absolute; left: 14px; top: 25px; line-height: 12px; font-style: normal; }
.kn .knob { margin-top: -1px; overflow: visible; }
.lfo { display: grid; grid-template-columns: 46px 55px; column-gap: 15px; row-gap: 4px; padding: 3px 20px 0 18px; border-right: 1px solid #808080; height: 37px; align-content: start; }
.lfo .two .btn { width: 26px; padding: 0; }
.btn.light { background: #eee; }
.btn.note { color: #777; }
.env { display: flex; padding: 0 0 0 9px; gap: 4px; }
.rack-end { width: 17px; margin-left: 2px; }
.chain-meter { width: 5px; height: 115px; margin: 42px 2px 0 3px; background: linear-gradient(90deg, #333 0 2px, transparent 2px 3px, #333 3px); }
.reverb { width: 420px; }
.reverb header { padding-left: 3px; }
.panels { display: flex; gap: 3px; padding: 0 1px; height: 122px; }
.panel { background: var(--dark); border-radius: 2px; color: #bbb; padding: 4px 4px 0; display: flex; flex-direction: column; }
.panel h4 { color: #ccc; white-space: nowrap; }
.panel b { font-weight: 500; }
.filt { width: 108px; }
.row2 { display: flex; justify-content: space-between; margin-top: 3px; }
.row2.gold { color: var(--gold); padding: 2px 3px 0; }
.y { height: 14px; width: 48px; background: var(--gold); border: 1px solid var(--gold); color: #222; line-height: 12px; }
.y.hollow { background: none; color: var(--gold); }
.graph { height: 60px; width: 100%; margin-top: 4px; }
.graph text { font: 10px Roboto, sans-serif; text-anchor: middle; fill: #bbb; }
.graph .hot { fill: var(--gold); }
.early { width: 105px; align-items: center; }
.spin { width: 44px; height: 15px; margin: 15px 0 7px; border: 0; background: var(--bright); color: #033; font-weight: 500; }
.cols { display: grid; grid-template-columns: 50px 50px; text-align: center; }
.cols b { color: var(--bright); }
.panel hr { width: 97px; height: 1px; border: 0; background: #666; margin: 17px 0 5px; }
.diff { width: 206px; }
.vals { display: grid; grid-template-columns: 30px 23px 48px 40px; column-gap: 5px; margin-top: 3px; color: var(--gold); white-space: nowrap; }
.vals .y { width: auto; padding: 0; }
.vals.low { color: #999; margin-top: 5px; }
.rv { display: flex; padding: 3px 0 0 29px; }
.rk { width: 52px; display: flex; flex-direction: column; align-items: center; height: 52px; white-space: nowrap; }
.rk .knob { margin: -2px 0 -4px; }
.smooth { width: 41px; padding-top: 9px; margin-left: 36px; }
.size { margin-left: 5px; }
.decay { margin-left: 6px; }
.freeze { display: grid; grid-template-columns: 26px 25px; gap: 3px; align-content: start; margin: 12px 0 0 16px; }
.freeze .btn { padding: 0; }
.freeze .btn:first-child { grid-column: 1 / 3; }
```
FILE: script.js
```js
const el = (parent, tag, attrs, text) => {
  const n = document.createElementNS('http://www.w3.org/2000/svg', tag);
  for (const k in attrs) n.setAttribute(k, attrs[k]);
  if (text !== undefined) n.textContent = text;
  parent.appendChild(n);
  return n;
};
const rect = (p, x, y, w, h, fill) => el(p, 'rect', { x, y, width: w, height: h, fill });

// Timeline geometry: bar 47 starts at ORIGIN, each bar is BAR wide.
const ORIGIN = 17.4, BAR = 28.59;
const barX = bar => Math.round(ORIGIN + (bar - 47) * BAR);
const LOCATORS = [49, 73, 81];
const BLUE = '#10a4ee', GREEN = '#1aff2f';
let seed = 7;
const rnd = () => (seed = (seed * 16807) % 2147483647) / 2147483647;

function grid(svg, top, h, w) {
  for (let b = 41; barX(b) < w; b += 8) rect(svg, barX(b), top, barX(b + 4) - barX(b), h, '#999');
  for (let b = 47; barX(b) < w; b++) rect(svg, barX(b), top, 1, h, 'rgba(0,0,0,.26)');
}
function locators(svg, top, h) {
  LOCATORS.forEach(b => rect(svg, barX(b), top, 1, h, '#3c3c3c'));
}
// every: a tick is drawn on the clip's edges once in that many bars
function clip(svg, from, to, h, color, label, w, every) {
  const x0 = from === null ? 0 : barX(from), x1 = to === null ? w : barX(to);
  rect(svg, x0, 1, x1 - x0, h - 1, color);
  for (let b = 47; barX(b) < x1; b++) {
    const x = barX(b);
    if (x <= x0) continue;
    if (h > 30) rect(svg, x, 19, 1, h - 19, 'rgba(0,0,0,.25)');
    if ((b - 49) % every === 0) { rect(svg, x, 1, 1, 3, '#222'); if (h > 30) rect(svg, x, h - 3, 1, 3, '#222'); }
  }
  rect(svg, x0, 1, x1 - x0, 1, 'rgba(0,0,0,.45)');
  if (h > 30) rect(svg, x0, 18, x1 - x0, 1, 'rgba(0,0,0,.5)');
  if (from !== null) rect(svg, x0, 1, 1, h - 1, 'rgba(0,0,0,.5)');
  el(svg, 'text', { x: x0 + 3, y: 14, style: 'fill:rgba(0,0,0,.8);font-size:11px' }, label);
  return [x0, x1];
}

function hatsWave(svg, x0, x1, cy) {
  let up = '', down = '', hit = -1, ua = 0, da = 0;
  for (let x = x0; x <= x1; x++) {
    const n = Math.floor((x - x0) / 7.14), ph = ((x - x0) % 7.14) / 7.14;
    if (n !== hit) { hit = n; ua = 7 + rnd() * 6 + (rnd() > .9 ? 5 : 0); da = 7 + rnd() * 6 + (rnd() > .9 ? 4 : 0); }
    const spike = Math.max(0, 1 - Math.abs(ph - 0.4) * 2.2);
    const jag = rnd() * 4 - 1;
    up += `${x} ${(cy - 4 - spike * ua - jag).toFixed(1)} `;
    down = `${x} ${(cy + 4 + spike * da + rnd() * 3 - 1).toFixed(1)} ` + down;
  }
  el(svg, 'polygon', { points: up + down, fill: '#222b22' });
}
function clWave(svg, x0, x1, cy) {
  let d = '';
  for (let x = x0 + 3, i = 0; x < x1; x += 7.14, i++) {
    const a = i % 4 === 3 ? 14 : 12, b = i % 4 === 2 ? 17 : 14;
    d += `M${x - 2.8} ${cy}Q${x - 1.6} ${cy - 3} ${x - 0.6} ${cy - a}H${x + 0.6}Q${x + 1.8} ${cy - 3} ${x + 3} ${cy}Q${x + 2.2} ${cy + 5} ${x + 0.6} ${cy + b}H${x - 0.6}Q${x - 2} ${cy + 5} ${x - 2.8} ${cy}Z`;
  }
  el(svg, 'path', { d, fill: '#222b22' });
  rect(svg, x0, cy - 0.5, x1 - x0, 1, '#222b22');
}

const lanes = {
  percs(svg, w) { rect(svg, 0, 2, w, 16, 'rgba(0,0,0,.13)'); rect(svg, 0, 11, w, 1, 'rgba(255,255,255,.18)'); },
  perc1(svg, w) {
    clip(svg, null, null, 91, BLUE, '...', w, 2);
    for (let b = 47; barX(b) < w; b += 2) rect(svg, barX(b) + 21, 43, 8, 11, '#20292e');
  },
  claves(svg, w) {
    clip(svg, null, null, 92, BLUE, '...', w, 1);
    const pat = [-1, 4, 0, 2, 3, 4, 3, 2, 4, 3, 2, -2, 3, 3, 2, 0, 3, 3, -2, 0, 3];
    for (let x = 0, i = 0; x < w; x += 7.144, i++) {
      const k = pat[i % pat.length], px = Math.round(x);
      if (k > 0) rect(svg, px, 44, k, 11, '#20292e');
      else for (let j = 0; j <= 1 - k; j++) rect(svg, px + j * 2, 44, 1, 11, k < 0 ? '#14587c' : '#20292e');
    }
    rect(svg, barX(52), 0, 2, 92, '#5fe3fa');
  },
  hats(svg, w) {
    const [a, b] = clip(svg, 57, 81, 109, GREEN, 'HATS', w, 4);
    hatsWave(svg, a, b, 41); hatsWave(svg, a, b, 87);
  },
  cl(svg, w) {
    [[null, 49, '... CL'], [49, 57, 'CL'], [65, null, 'CL']].forEach(([f, t, l]) => {
      const [a, b] = clip(svg, f, t, 91, GREEN, l, w, 4);
      clWave(svg, a, b, 37); clWave(svg, a, b, 73);
    });
  },
  shaker(svg, w) { clip(svg, 57, null, 18, GREEN, 'SHAKER', w, 4); },
  empty() {},
  main(svg, w) { el(svg, 'text', { x: w - 33, y: 15, style: 'font-size:17px;fill:#6a6a6a' }, '1/1'); }
};
document.querySelectorAll('.lane').forEach(svg => {
  const w = svg.clientWidth, h = svg.clientHeight;
  grid(svg, 0, h, w);
  lanes[svg.dataset.lane](svg, w);
  rect(svg, 0, h - 2, w, 2, '#747474');
  locators(svg, 0, h);
});

// Bar ruler
{
  const svg = document.getElementById('ruler'), w = svg.clientWidth;
  for (let b = 49; barX(b) < w; b += 8) rect(svg, barX(b), 23, barX(b + 4) - barX(b), 25, '#999');
  for (let b = 47; barX(b) < w; b++) {
    const major = b % 2 === 1;
    rect(svg, barX(b), major ? 16 : 22, 1, 32, 'rgba(0,0,0,.3)');
    if (major && b < 85) { rect(svg, barX(b), 16, 3, 1, '#777'); el(svg, 'text', { x: barX(b) + 6, y: 21 }, b); }
  }
  [[49, 'VOCAL', 38], [73, 'MORE PERCS', 70], [81, 'MORE', 36]].forEach(([b, t, tw]) => {
    const x = barX(b);
    rect(svg, x + 10, 35, tw, 12, '#a5a5a5');
    rect(svg, x, 36, 1, 12, '#3c3c3c');
    el(svg, 'path', { d: `M${x + .5} 36v10l9-5z`, fill: '#d8d8d8', stroke: '#444' });
    el(svg, 'text', { x: x + 13, y: 45, style: 'fill:#111;font-size:11px' }, t);
  });
  const s = barX(81);
  el(svg, 'path', { d: `M${w} 23.500H${s + .5}v10H${w}M${s + .5} 23.500l8 5-8 5`, fill: 'none', stroke: '#555' });
  el(svg, 'path', { d: `M${barX(52) - 4} 43h8l-4 4z`, fill: '#00e5f5' });
}
// Time ruler
{
  const svg = document.getElementById('time'), w = svg.clientWidth;
  for (let b = 47; barX(b) < w; b++) rect(svg, barX(b), 0, 1, 3, '#666');
  ['1:40', '1:50', '2:00', '2:10', '2:20', '2:30', '2:40'].forEach((t, i) => {
    const x = Math.round(132 + i * 142.9);
    rect(svg, x, 0, 1, 9, '#666'); rect(svg, x, 9, 3, 1, '#666');
    el(svg, 'text', { x: x + 3, y: 13 }, t);
  });
  el(svg, 'path', { d: `M${barX(52) - 4} 6h8l-4-4z`, fill: '#00e5f5' });
}
// Overview
{
  const svg = document.getElementById('overview');
  rect(svg, 0, 0, 1436, 13, '#a5a5a5');
  [[0, 232, 1, '#a09aa8'], [0, 232, 3, '#8fa898'], [0, 232, 5, '#a898a4'], [0, 232, 7, '#a8909a'], [0, 1150, 9, '#e0a040'],
   [232, 1335, 1, '#d85a60'], [232, 420, 3, '#6fb878'], [420, 1220, 3, '#2fe048'], [232, 300, 5, '#d080b8'], [300, 1380, 5, '#f048c8'], [232, 1150, 7, '#8a90c8']].forEach(([a, b, y, c]) => rect(svg, a, y, b - a, 2, c));
  [[110, 290], [350, 420], [440, 500], [640, 700], [800, 860], [880, 960], [1190, 1270], [1330, 1390]].forEach(([a, b]) => rect(svg, a, 11, b - a, 1, '#d4d0c8'));
  [58, 116, 203, 232, 348, 370, 464, 522, 580, 639, 697, 871, 929, 1046, 1161, 1219].forEach(x => rect(svg, x, 0, 1, 13, '#555'));
  el(svg, 'rect', { x: 329, y: .5, width: 284, height: 12, rx: 3, fill: 'none', stroke: '#2a2a2a', 'stroke-width': 2 });
}
// Note editor: one beat is 236 wide
{
  const svg = document.getElementById('score'), w = svg.clientWidth, Q = 118;
  rect(svg, 0, 0, w, 200, '#c5c5c5');
  for (let x = 0; x < w; x += 472) rect(svg, x, 0, 236, 200, '#b7b7b7');
  rect(svg, 0, 19, w, 42, '#a5a5a5');
  rect(svg, 0, 61, w, 25, 'rgba(0,0,0,.12)');
  rect(svg, 427, 61, 251, 139, 'rgba(120,200,210,.2)');
  rect(svg, 0, 43, w, 18, '#909090');
  for (let x = 59; x < w; x += 59) rect(svg, x, 30, 1, 170, x % 236 ? 'rgba(0,0,0,.1)' : 'rgba(0,0,0,.22)');
  rect(svg, 0, 19, w, 11, BLUE);
  [[18, '#666'], [29, '#2d5a78'], [42, '#666'], [60, '#666'], [111, 'rgba(0,0,0,.1)'], [170, '#666'], [171, '#777']].forEach(([y, c]) => rect(svg, 0, y, w, 1, c));
  for (let x = 0; x < w; x += 29.5) rect(svg, Math.round(x), 17, 1, 2, '#666');
  ['1', '1.1.3', '1.2', '1.2.3', '1.3', '1.3.3', '1.4', '1.4.3'].forEach((t, i) => {
    rect(svg, i * Q, 12, 1, 7, '#666'); rect(svg, i * Q, 12, 3, 1, '#666');
    el(svg, 'text', { x: i * Q + 5, y: 16 }, t);
  });
  [24, 36].forEach(y => {
    el(svg, 'path', { d: `M0 ${y - 5}v11l9-5.500z`, fill: '#ddd', stroke: '#444' });
    el(svg, 'path', { d: `M${w} ${y - 4}l-5 4.500 5 4.500`, fill: '#ddd', stroke: '#444' });
  });
  [428, 678].forEach((x, i) => {
    el(svg, 'path', { d: `M${x - 4} 43.500h8v7l-4 4-4-4z`, fill: '#ccc', stroke: '#333' });
    el(svg, 'path', { d: i ? `M${x + 1} 60v-4h4z` : `M${x - 1} 60v-4h-4z`, fill: '#bff' });
  });
  [[117, 29, 0], [176, 29, 0], [353, 29, 1], [382, 14, 0], [427, 15, 0], [590, 27, 1], [617, 15, 0], [663, 15, 0], [825, 29, 2], [884, 29, 0]].forEach(([x, nw, dy]) => {
    el(svg, 'rect', { x: x + .5, y: 61, width: nw - 1, height: 23.5, fill: '#28a0e0', stroke: '#111' });
    el(svg, 'text', { x: x + 4, y: 77, style: 'fill:#012;font-size:11px;font-weight:500' }, nw > 20 ? 'ET' : 'E');
    rect(svg, x + 4, 180 + dy, nw - 4, 1, '#222');
    el(svg, 'circle', { cx: x + 3.5, cy: 180.500 + dy, r: 3, fill: BLUE, stroke: '#123' });
  });
}
// Simpler sample
{
  const svg = document.getElementById('wave'), w = svg.clientWidth;
  rect(svg, 0, 0, w, 92, '#1c5558'); rect(svg, 0, 0, 472, 92, '#147a80');
  for (let i = 0; i < 17; i++) rect(svg, Math.round(i * 41.500), i % 4 ? 88 : 82, 1, i % 4 ? 4 : 10, '#5aa0a4');
  const env = [[0, 30], [3, 40], [10, 42], [15, 38], [21, 27], [27, 22], [32, 15], [38, 22], [44, 26], [50, 18], [58, 7], [65, 9], [71, 10], [78, 4], [83, 2], [88, 4], [98, 12], [108, 16], [116, 12], [121, 11], [129, 18], [136, 20], [143, 18], [153, 11], [160, 11], [168, 11], [175, 6], [183, 2], [198, 1], [208, 4], [223, 5], [238, 5], [253, 3], [273, 3], [288, 2], [298, 4], [308, 1], [323, 3], [343, 1], [368, 3], [383, 1], [398, 3], [413, 2], [433, 2], [472, 1]];
  let pts = '', k = 0;
  for (let x = 0; x <= 472; x += .5) {
    while (k < env.length - 2 && env[k + 1][0] < x) k++;
    const [x0, a0] = env[k], [x1, a1] = env[k + 1];
    pts += `${x} ${(46 - (a0 + (a1 - a0) * (x - x0) / (x1 - x0)) * Math.sin(x / 4.2 * 6.283)).toFixed(1)} `;
  }
  el(svg, 'polyline', { points: pts, fill: 'none', stroke: '#ffb900', 'stroke-width': 1.6 });
  rect(svg, 472, 46, w - 472, 1, '#777');
  [['0:00', 2], ['0:00:020', 168], ['0:00:040', 334], ['0:00:060', 500]].forEach(([t, x]) => el(svg, 'text', { x: x + 1, y: 86, style: 'fill:#6fb0b3' }, t));
  el(svg, 'path', { d: `M0 1v10l9-5zM${w} 1v10l-9-5z`, fill: '#bbb' });
  rect(svg, 0, 0, 1, 92, '#bbb'); rect(svg, w - 1, 0, 1, 92, '#bbb');
}
// Pad overview
{
  const svg = document.getElementById('minimap');
  for (let r = 0; r < 32; r++) for (let c = 0; c < 4; c++) {
    const dark = [0, 1, 0, 1, 0, 1, 0, 1, 1][Math.floor((r + 1) / 4)];
    rect(svg, Math.round(c * 5.33), Math.round(1 + r * 5.33), 4, 4, r === 22 && c < 2 ? '#ddd' : dark ? '#6e6e6e' : '#8c8c8c');
  }
  el(svg, 'rect', { x: .5, y: 101.500, width: 21, height: 21, fill: 'none', stroke: '#444' });
}
// Chain input level
{
  const svg = document.getElementById('dots');
  for (let y = 49; y < 158; y += 5.33) el(svg, 'circle', { cx: 4.5, cy: y, r: 1.8, fill: '#222' });
}
// Knobs: angle in degrees clockwise from the top, arc open at the bottom
document.querySelectorAll('.knob').forEach(svg => {
  const r = +svg.dataset.r, s = r * 2 + 3, c = s / 2, a = +svg.dataset.a, col = svg.dataset.c;
  svg.setAttribute('width', s); svg.setAttribute('height', s);
  const pt = (deg, q) => { const t = (deg - 90) * Math.PI / 180; return `${(c + q * Math.cos(t)).toFixed(2)} ${(c + q * Math.sin(t)).toFixed(2)}`; };
  const end = r < 12 ? 90 : 145, start = r < 12 ? -170 : -145;
  const arc = (f, t, color) => el(svg, 'path', { d: `M${pt(f, r)}A${r} ${r} 0 ${t - f > 180 ? 1 : 0} 1 ${pt(t, r)}`, fill: 'none', stroke: color, 'stroke-width': 2 });
  if (svg.dataset.fill) { arc(start, a, '#00e5f5'); arc(a, end, col); } else arc(start, end, col);
  el(svg, 'path', { d: `M${c} ${c}L${pt(a, r)}`, stroke: col, 'stroke-width': 2 });
  if (svg.dataset.mark) el(svg, 'path', { d: 'M-3 4l6-5v5z', fill: '#00e5f5' });
});
```
